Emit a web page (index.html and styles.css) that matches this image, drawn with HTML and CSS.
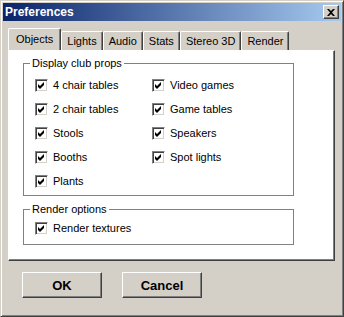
FILE: index.html
```html
<!DOCTYPE html>
<html lang="en">
<head>
    <meta charset="UTF-8">
    <title>Preferences</title>
    <link rel="stylesheet" href="styles.css">
</head>
<body>
    <div class="window">
        <div class="titlebar">
            <span class="title">Preferences</span>
            <button class="close" aria-label="Close">
                <svg width="8" height="7" viewBox="0 0 8 7"><path d="M0 0h2l2 2 2-2h2L5 3.5 8 7H6L4 5 2 7H0l3-3.5z" fill="#000"/></svg>
            </button>
        </div>
        <div class="tabs">
            <div class="tab active">Objects</div>
            <div class="tab">Lights</div>
            <div class="tab">Audio</div>
            <div class="tab">Stats</div>
            <div class="tab">Stereo 3D</div>
            <div class="tab">Render</div>
        </div>
        <div class="panel">
            <fieldset class="group">
                <legend>Display club props</legend>
                <div class="columns">
                    <div class="col">
                        <label class="row"><span class="box"><svg width="13" height="13" viewBox="0 0 13 13"><path d="M3 5v3l2 2 4-4V3L5 7z"/></svg></span>4 chair tables</label>
                        <label class="row"><span class="box"><svg width="13" height="13" viewBox="0 0 13 13"><path d="M3 5v3l2 2 4-4V3L5 7z"/></svg></span>2 chair tables</label>
                        <label class="row"><span class="box"><svg width="13" height="13" viewBox="0 0 13 13"><path d="M3 5v3l2 2 4-4V3L5 7z"/></svg></span>Stools</label>
                        <label class="row"><span class="box"><svg width="13" height="13" viewBox="0 0 13 13"><path d="M3 5v3l2 2 4-4V3L5 7z"/></svg></span>Booths</label>
                        <label class="row"><span class="box"><svg width="13" height="13" viewBox="0 0 13 13"><path d="M3 5v3l2 2 4-4V3L5 7z"/></svg></span>Plants</label>
                    </div>
                    <div class="col">
                        <label class="row"><span class="box"><svg width="13" height="13" viewBox="0 0 13 13"><path d="M3 5v3l2 2 4-4V3L5 7z"/></svg></span>Video games</label>
                        <label class="row"><span class="box"><svg width="13" height="13" viewBox="0 0 13 13"><path d="M3 5v3l2 2 4-4V3L5 7z"/></svg></span>Game tables</label>
                        <label class="row"><span class="box"><svg width="13" height="13" viewBox="0 0 13 13"><path d="M3 5v3l2 2 4-4V3L5 7z"/></svg></span>Speakers</label>
                        <label class="row"><span class="box"><svg width="13" height="13" viewBox="0 0 13 13"><path d="M3 5v3l2 2 4-4V3L5 7z"/></svg></span>Spot lights</label>
                    </div>
                </div>
            </fieldset>
            <fieldset class="group render">
                <legend>Render options</legend>
                <div class="col">
                    <label class="row"><span class="box"><svg width="13" height="13" viewBox="0 0 13 13"><path d="M3 5v3l2 2 4-4V3L5 7z"/></svg></span>Render textures</label>
                </div>
            </fieldset>
        </div>
        <div class="buttons">
            <button class="btn">OK</button>
            <button class="btn">Cancel</button>
        </div>
    </div>
</body>
</html>
```

FILE: styles.css
```css
body {
    margin: 0;
    font-family: 'Liberation Sans', Arial, sans-serif;
    font-size: 11px;
    color: #000;
}
.window {
    width: 344px;
    height: 317px;
    box-sizing: border-box;
    background: #d4d0c8;
    border: 1px solid;
    border-color: #d4d0c8 #404040 #404040 #d4d0c8;
    box-shadow: inset 1px 1px #fff, inset -1px -1px #808080;
    padding: 2px;
}
.titlebar {
    height: 18px;
    background: linear-gradient(to right, #0a246a, #a6caf0);
    display: flex;
    align-items: center;
    justify-content: space-between;
    padding: 0 2px;
}
.title {
    color: #fff;
    font-weight: bold;
    font-size: 12px;
}
.close {
    width: 16px;
    height: 14px;
    padding: 0;
    background: #d4d0c8;
    border: 1px solid;
    border-color: #fff #404040 #404040 #fff;
    box-shadow: inset -1px -1px #808080;
    display: flex;
    align-items: center;
    justify-content: center;
}
.tabs {
    display: flex;
    align-items: flex-end;
    height: 22px;
    margin-top: 7px;
    padding-left: 5px;
}
.tab {
    height: 19px;
    line-height: 19px;
    padding: 0 5px;
    box-sizing: border-box;
    border: 1px solid;
    border-bottom: none;
    border-color: #fff #404040 #fff #fff;
    box-shadow: inset -1px 0 #808080;
    border-radius: 2px 2px 0 0;
}
.tab.active {
    height: 22px;
    line-height: 21px;
    padding: 0 7px;
}
.panel {
    margin-left: 5px;
    width: 327px;
    height: 211px;
    box-sizing: border-box;
    background: #fff;
    border-top: 1px solid #fff;
    border-left: 1px solid #fff;
    border-right: 1px solid #404040;
    border-bottom: 1px solid #404040;
    box-shadow: inset -1px -1px #808080;
    padding: 6px 0 0 14px;
}
.group {
    width: 271px;
    box-sizing: border-box;
    margin: 0;
    border: 1px solid #808080;
    padding: 3px 0 2px 6px;
}
.group legend {
    padding: 0 2px;
    line-height: 13px;
}
.group.render {
    margin-top: 7px;
    padding-top: 0;
    padding-bottom: 4px;
}
.columns {
    display: flex;
}
.col {
    margin-left: 5px;
    display: flex;
    flex-direction: column;
}
.columns .col:first-child {
    width: 117px;
}
.columns .col + .col {
    margin-left: 0;
}
.row {
    height: 24px;
    display: flex;
    align-items: center;
    gap: 5px;
}
.box {
    width: 13px;
    height: 13px;
    box-sizing: border-box;
    background: #fff;
    position: relative;
    border: 1px solid;
    border-color: #808080 #fff #fff #808080;
    box-shadow: inset 1px 1px #404040, inset -1px -1px #d4d0c8;
}
.box svg {
    position: absolute;
    left: -1px;
    top: -1px;
}
.buttons {
    display: flex;
    gap: 20px;
    margin: 11px 0 0 19px;
}
.btn {
    width: 80px;
    height: 26px;
    background: #d4d0c8;
    font-family: 'Liberation Sans', Arial, sans-serif;
    font-weight: bold;
    font-size: 13px;
    color: #000;
    border: 1px solid;
    border-color: #fff #404040 #404040 #fff;
    box-shadow: inset -1px -1px #808080;
    padding: 0;
}
```
